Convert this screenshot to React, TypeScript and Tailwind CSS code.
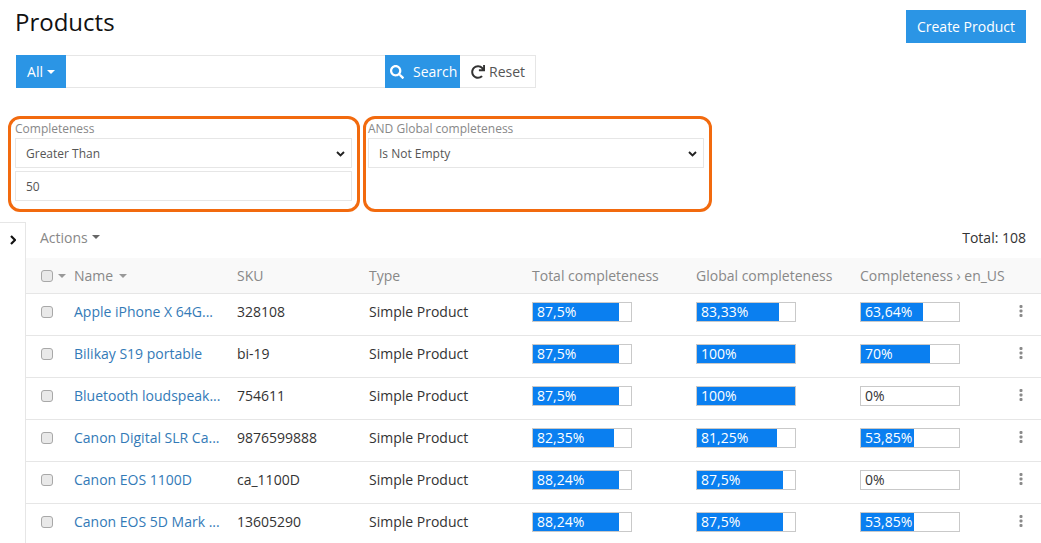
import React from 'react';
import { FaRedo, FaSearch } from 'react-icons/fa';

interface Product {
    name: string;
    sku: string;
    total: string;
    global: string;
    locale: string;
}

const products: Product[] = [
    { name: 'Apple iPhone X 64G...', sku: '328108', total: '87,5', global: '83,33', locale: '63,64' },
    { name: 'Bilikay S19 portable', sku: 'bi-19', total: '87,5', global: '100', locale: '70' },
    { name: 'Bluetooth loudspeak...', sku: '754611', total: '87,5', global: '100', locale: '0' },
    { name: 'Canon Digital SLR Ca...', sku: '9876599888', total: '82,35', global: '81,25', locale: '53,85' },
    { name: 'Canon EOS 1100D', sku: 'ca_1100D', total: '88,24', global: '87,5', locale: '0' },
    { name: 'Canon EOS 5D Mark ...', sku: '13605290', total: '88,24', global: '87,5', locale: '53,85' },
];

const gridCols = 'grid grid-cols-[48px_163px_132px_163px_164px_164px_1fr] items-center';

const Caret = ({ className = '' }: { className?: string }) => (
    <span className={`inline-block w-0 h-0 border-x-[4px] border-x-transparent border-t-[4px] ${className}`} />
);

const Checkbox = () => (
    <input type="checkbox" className="appearance-none block w-3 h-3 rounded-[3px] bg-[#e9e9e9] border border-[#a8a8a8]" />
);

const Bar = ({ value }: { value: string }) => {
    const pct = parseFloat(value.replace(',', '.'));
    return (
        <div className="w-[100px] h-5 border border-[#c9c9c9] bg-white text-[14px] leading-[18px]">
            <div
                className={`h-full pl-1 whitespace-nowrap ${pct > 0 ? 'bg-[#0a7ff0] text-white' : 'text-[#333]'}`}
                style={{ width: `${pct}%` }}
            >
                {value}%
            </div>
        </div>
    );
};

const Dots = () => (
    <svg width="4" height="12" viewBox="0 0 4 12" className="fill-[#8a8a8a] mb-[2px]">
        <rect x="0.5" y="0" width="3" height="3" rx="1" />
        <rect x="0.5" y="4.5" width="3" height="3" rx="1" />
        <rect x="0.5" y="9" width="3" height="3" rx="1" />
    </svg>
);

// chevron over the native select, the stock one is too thin
const SelectBox = ({ label }: { label: string }) => (
    <div className="relative h-[30px]">
        <select defaultValue={label} className="appearance-none block w-full h-full border border-[#e6e6e6] bg-white pl-[10px] pt-[2px] text-[#555]">
            <option value={label}>{label}</option>
        </select>
        <svg width="9" height="6" viewBox="0 0 9 6" className="absolute right-[7px] top-[13px] pointer-events-none">
            <path d="M1 1 L4.5 4.5 L8 1" fill="none" stroke="#222" strokeWidth="1.9" />
        </svg>
    </div>
);

export default function App() {
    return (
        <div className="w-[1041px] h-[543px] overflow-hidden bg-white text-[14px] text-[#333] font-['Open_Sans',sans-serif]">

            {/* Title */}
            <div className="flex justify-between pl-[15px] pr-[15px] pt-[10px] h-[55px]">
                <h1 className="text-[24px] leading-[24px] text-[#111]">Products</h1>
                <button className="w-[120px] h-[33px] bg-[#2b95e5] text-white">Create Product</button>
            </div>

            {/* Search */}
            <div className="flex pl-4 h-[33px]">
                <button className="w-[50px] bg-[#2b95e5] text-white flex items-center justify-center gap-1">
                    All <Caret className="border-t-white" />
                </button>
                <input className="w-[319px] border-y border-[#e6e6e6]" />
                <button className="w-[75px] bg-[#2b95e5] text-white flex items-center pl-[5px] gap-[9px]">
                    <FaSearch size={14} /> Search
                </button>
                <button className="w-[76px] border border-l-0 border-[#e6e6e6] flex items-center pl-[11px] gap-[4px] text-[#555]">
                    <FaRedo size={14} className="text-[#333]" /> Reset
                </button>
            </div>

            {/* Filters */}
            <div className="flex pl-2 gap-[3px] mt-[28px] h-[96px] text-[12px]">
                <div className="w-[352px] border-[3px] border-[#f26a0e] rounded-[12px] pl-1 pr-[5px]">
                    <div className="h-[19px] leading-[19px] text-[#888]">Completeness</div>
                    <SelectBox label="Greater Than" />
                    <input defaultValue="50" className="block w-full h-[30px] mt-[3px] border border-[#e6e6e6] pl-[10px] text-[#555]" />
                </div>
                <div className="w-[349px] border-[3px] border-[#f26a0e] rounded-[12px] pl-[2px] pr-[5px]">
                    <div className="h-[19px] leading-[19px] text-[#888]">AND Global completeness</div>
                    <SelectBox label="Is Not Empty" />
                </div>
            </div>

            {/* Table */}
            <div className="flex mt-[10px]">
                <div className="w-[26px] shrink-0 border-t border-r border-[#e6e6e6] pt-[12px] pl-[10px]">
                    <svg width="6" height="10" viewBox="0 0 6 10">
                        <path d="M1 1 L5 5 L1 9" fill="none" stroke="#111" strokeWidth="2.2" />
                    </svg>
                </div>
                <div className="flex-1">
                    <div className="flex items-center justify-between h-[36px] pb-[6px] pl-[14px] pr-[15px]">
                        <span className="flex items-center gap-1 text-[#888]">Actions <Caret className="border-t-[#666]" /></span>
                        <span>Total: 108</span>
                    </div>
                    <div className={`${gridCols} h-[36px] bg-[#f9f9f9] border-b border-[#e6e6e6] text-[#888]`}>
                        <div className="flex items-center gap-[5px] pl-[15px]">
                            <Checkbox />
                            <Caret className="border-t-[#999]" />
                        </div>
                        <div className="flex items-center gap-[6px]">Name <Caret className="border-t-[#999]" /></div>
                        <div>SKU</div>
                        <div>Type</div>
                        <div>Total completeness</div>
                        <div>Global completeness</div>
                        <div className="whitespace-nowrap">Completeness › en_US</div>
                    </div>
                    {products.map((p) => (
                        <div key={p.sku} className={`${gridCols} h-[42px] pb-[6px] border-b border-[#e6e6e6]`}>
                            <div className="pl-[15px]"><Checkbox /></div>
                            <div className="whitespace-nowrap text-[#337ab7]">{p.name}</div>
                            <div>{p.sku}</div>
                            <div>Simple Product</div>
                            <Bar value={p.total} />
                            <Bar value={p.global} />
                            <div className="flex items-center justify-between pr-[18px]">
                                <Bar value={p.locale} />
                                <Dots />
                            </div>
                        </div>
                    ))}
                </div>
            </div>
        </div>
    );
}
